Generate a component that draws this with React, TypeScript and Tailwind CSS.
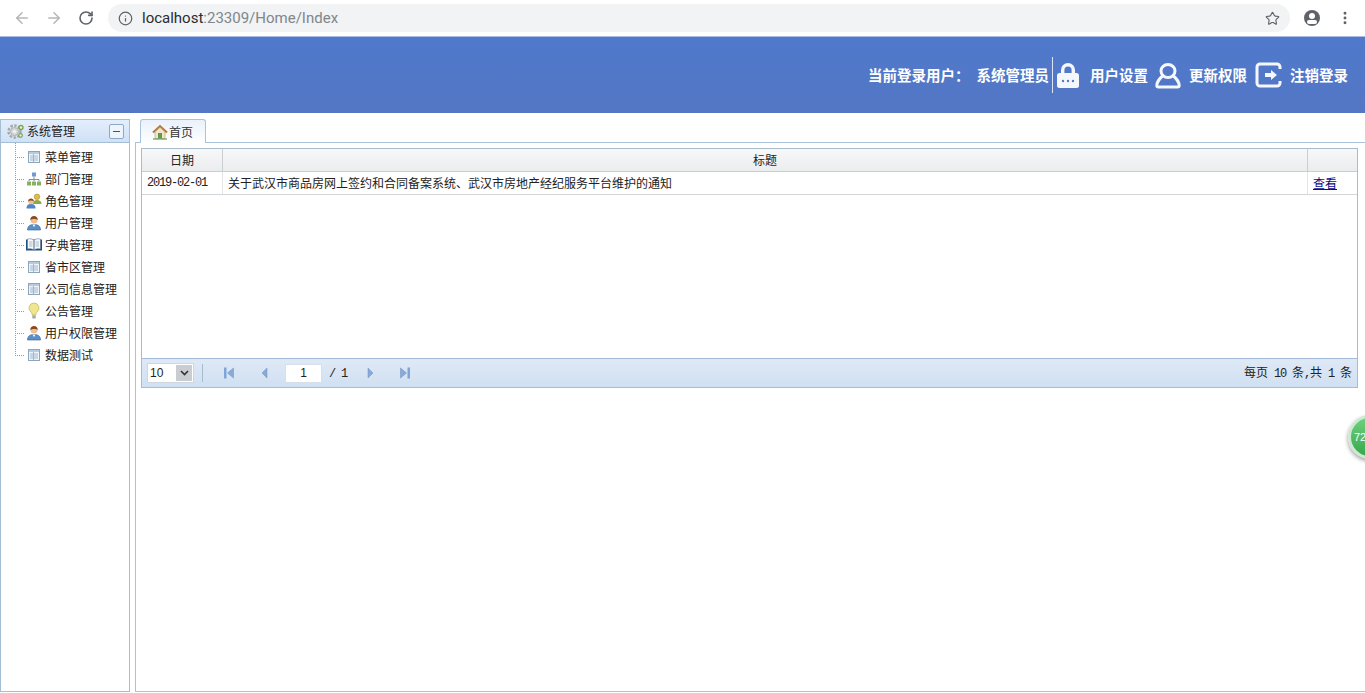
import React from 'react';
import { ArrowLeft, ArrowRight, RotateCw, Info, Star, MoreVertical } from 'lucide-react';

const cjk = 'font-["Noto_Sans_CJK_SC","Liberation_Sans",sans-serif]';
const mono = 'font-["Liberation_Mono","Noto_Sans_CJK_SC",monospace]';

// small tree icons
const TableIcon = () => (
  <svg width="16" height="16" viewBox="0 0 16 16">
    <rect x="2.500" y="2.500" width="11" height="11" fill="#eef4fa" stroke="#8fa5b8" />
    <rect x="3" y="3" width="10" height="2" fill="#b4cce2" />
    <path d="M4 7h8M4 9h8M4 11h8M7.500 5v8" stroke="#9db8d0" strokeWidth="1" />
  </svg>
);

const OrgIcon = () => (
  <svg width="16" height="16" viewBox="0 0 16 16">
    <rect x="6" y="1.500" width="4" height="4" fill="#6f9bd0" />
    <path d="M8 5.500v3M3 10V8.500h10V10M8 8.500V10" stroke="#7d8f9c" fill="none" />
    <rect x="1" y="10.500" width="4" height="4" fill="#86b25c" />
    <rect x="6" y="10.500" width="4" height="4" fill="#86b25c" />
    <rect x="11" y="10.500" width="4" height="4" fill="#86b25c" />
  </svg>
);

const UserIcon = () => (
  <svg width="16" height="16" viewBox="0 0 16 16">
    <path d="M1.500 15c0-4 2.500-5.500 6.500-5.500s6.500 1.500 6.500 5.500z" fill="#5d8fc9" stroke="#2f5f96" strokeWidth="0.600" />
    <path d="M6.500 9.500 8 12l1.500-2.500z" fill="#fff" />
    <circle cx="8" cy="5" r="3.600" fill="#f2bd92" />
    <path d="M4.300 5c0-3 1.700-4 3.700-4s3.700 1 3.700 4C10.500 3.500 6 3.500 4.300 5z" fill="#8a4b22" />
  </svg>
);

const RoleIcon = () => (
  <svg width="16" height="16" viewBox="0 0 16 16">
    <circle cx="11" cy="3.800" r="2.800" fill="#e3b94c" stroke="#a98420" strokeWidth="0.500" />
    <path d="M7 11c0-3 1.500-4 4-4s4.500 1 4.500 4z" fill="#86ad3e" />
    <path d="M0.500 15.500c0-3.500 1.800-4.500 4.500-4.500s4.500 1 4.500 4.500z" fill="#4f86c6" />
    <circle cx="5" cy="8.500" r="2.800" fill="#f2bd92" />
    <path d="M2.200 8.500c0-2.200 1.300-3 2.800-3s2.800 0.800 2.800 3C6.500 7.300 3.500 7.300 2.200 8.500z" fill="#8a4b22" />
  </svg>
);

const BookIcon = () => (
  <svg width="18" height="16" viewBox="0 0 18 16">
    <path d="M1 2.500h16v11H1z" fill="#1f4f7e" />
    <path d="M2.500 2c2.500-0.600 5 0 6.500 1 1.500-1 4-1.600 6.500-1v10c-2.500-0.500-5 0-6.500 1-1.500-1-4-1.500-6.500-1z" fill="#f6f8fb" stroke="#48688a" strokeWidth="0.500" />
    <path d="M9 3v10" stroke="#48688a" />
    <path d="M4 5h3.500M4 7h3.500M4 9h3.500M10.500 5H14M10.500 7H14M10.500 9H14" stroke="#aab8c6" />
  </svg>
);

const BulbIcon = () => (
  <svg width="16" height="18" viewBox="0 0 16 18">
    <path d="M8 1a5 5 0 0 0-3 9c0.800 0.800 1 1.500 1.200 3h3.600c0.200-1.500 0.400-2.200 1.200-3a5 5 0 0 0-3-9z" fill="#f0e68f" stroke="#bdb35c" strokeWidth="0.700" />
    <rect x="6.300" y="13.300" width="3.400" height="3.200" fill="#a4a9ab" />
  </svg>
);

const GearIcon = () => (
  <svg width="18" height="18" viewBox="0 0 18 18">
    <circle cx="7.500" cy="9.500" r="6" fill="none" stroke="#a3a8a9" strokeWidth="2.400" strokeDasharray="2.400 1.500" />
    <circle cx="7.500" cy="9.500" r="4" fill="#d5d8d8" stroke="#9fa4a5" strokeWidth="0.800" />
    <circle cx="7.500" cy="9.500" r="1.600" fill="#f2f3f3" />
    <circle cx="14" cy="5.500" r="2" fill="#e8f1dc" stroke="#7fa84e" strokeWidth="1.400" />
    <circle cx="13.500" cy="13.500" r="1.800" fill="#e8f1dc" stroke="#7fa84e" strokeWidth="1.300" />
  </svg>
);

const HomeIcon = () => (
  <svg width="18" height="16" viewBox="0 0 18 16">
    <path d="M2 8.500 9 2l7 6.500" fill="none" stroke="#b6793a" strokeWidth="2" />
    <path d="M4 8 9 3.500 14 8v6.500H4z" fill="#f2e6c8" stroke="#9d8a5c" strokeWidth="0.500" />
    <rect x="7" y="9" width="4" height="5.500" fill="#5f9a4f" />
    <path d="M2 15h14" stroke="#6b9c5a" strokeWidth="1.200" />
  </svg>
);

type MenuRow = { label: string; icon: React.ReactNode };

const menu: MenuRow[] = [
  { label: '菜单管理', icon: <TableIcon /> },
  { label: '部门管理', icon: <OrgIcon /> },
  { label: '角色管理', icon: <RoleIcon /> },
  { label: '用户管理', icon: <UserIcon /> },
  { label: '字典管理', icon: <BookIcon /> },
  { label: '省市区管理', icon: <TableIcon /> },
  { label: '公司信息管理', icon: <TableIcon /> },
  { label: '公告管理', icon: <BulbIcon /> },
  { label: '用户权限管理', icon: <UserIcon /> },
  { label: '数据测试', icon: <TableIcon /> },
];

const LockIcon = () => (
  <svg width="26" height="27" viewBox="0 0 26 27" fill="#f4f7fc">
    <path d="M6 12V8a7 7 0 0 1 14 0v4h-3.400V8.200a3.600 3.600 0 0 0-7.200 0V12z" />
    <rect x="2" y="11" width="22" height="15" rx="2.500" />
    <circle cx="8" cy="19" r="1.200" fill="#5278c8" />
    <circle cx="13" cy="19" r="1.200" fill="#5278c8" />
    <circle cx="18" cy="19" r="1.200" fill="#5278c8" />
  </svg>
);

const PersonIcon = () => (
  <svg width="26" height="27" viewBox="0 0 26 27" fill="none" stroke="#f4f7fc" strokeWidth="3">
    <ellipse cx="13" cy="9" rx="7" ry="6.500" />
    <path d="M7.500 14C4 17 2 20 1.800 23.500c0 1 .7 1.500 1.700 1.500h19c1 0 1.700-.5 1.700-1.500C24 20 22 17 18.500 14" strokeLinejoin="round" />
  </svg>
);

const LogoutIcon = () => (
  <svg width="27" height="26" viewBox="0 0 27 26" fill="none">
    <path d="M25 7V5a3 3 0 0 0-3-3H5a3 3 0 0 0-3 3v16a3 3 0 0 0 3 3h17a3 3 0 0 0 3-3v-2" stroke="#f4f7fc" strokeWidth="3" />
    <path d="M10 11h6V8l6 5-6 5v-3h-6z" fill="#f4f7fc" />
  </svg>
);

const PagerArrow = ({ dir, bar }: { dir: 'l' | 'r'; bar?: boolean }) => (
  <svg width="12" height="14" viewBox="0 0 12 14">
    {dir === 'l' ? (
      <>
        {bar && <rect x="1" y="1.500" width="2.500" height="11" fill="#7ea4d8" />}
        <path d={bar ? 'M10.500 2v10L4.500 7z' : 'M9 2v10L4 7z'} fill="#8aa9d6" stroke="#6c90c4" strokeWidth="0.500" />
      </>
    ) : (
      <>
        <path d={bar ? 'M1.500 2v10l6-5z' : 'M3 2v10l5-5z'} fill="#8aa9d6" stroke="#6c90c4" strokeWidth="0.500" />
        {bar && <rect x="8.500" y="1.500" width="2.500" height="11" fill="#7ea4d8" />}
      </>
    )}
  </svg>
);

const BrowserBar = () => (
  <div className="h-[37px] bg-white flex items-center pl-[13px] pr-[12px] border-b border-[#a9bde3]">
    <ArrowLeft size={18} strokeWidth={2} className="text-[#b4b6b8]" />
    <ArrowRight size={18} strokeWidth={2} className="text-[#b4b6b8] ml-[14px]" />
    <RotateCw size={16} strokeWidth={2.400} className="text-[#5f6368] ml-[15px]" />
    <div className="ml-[14px] h-[28px] w-[1182px] rounded-full bg-[#f1f3f4] flex items-center pl-[10px] pr-[10px] font-['Roboto',sans-serif] text-[15px]">
      <Info size={15} strokeWidth={2} className="text-[#5f6368]" />
      <span className="ml-[9px] text-[#2a2c2e]">localhost</span>
      <span className="text-[#80868b]">:23309/Home/Index</span>
      <Star size={15} strokeWidth={1.800} className="text-[#5f6368] ml-auto" />
    </div>
    <div className="ml-[14px] w-[16px] h-[16px] rounded-full bg-[#5f6368] relative overflow-hidden">
      <div className="absolute left-[5px] top-[3px] w-[6px] h-[6px] rounded-full bg-white" />
      <div className="absolute left-[3px] top-[10px] w-[10px] h-[4px] rounded-full bg-white" />
    </div>
    <MoreVertical size={16} strokeWidth={2.400} className="text-[#5f6368] ml-[17px]" />
  </div>
);

const Header = () => (
  <div className={`h-[76px] bg-gradient-to-b from-[#4f79cc] to-[#5476c4] flex items-center justify-end pr-[17px] text-white text-[14.5px] font-semibold ${cjk}`}>
    <span>当前登录用户：</span>
    <span className="ml-[7px]">系统管理员</span>
    <div className="w-px h-[36px] bg-[#dbe5f7] ml-[3px]" />
    <div className="ml-[2px]"><LockIcon /></div>
    <span className="ml-[9px]">用户设置</span>
    <div className="ml-[7px]"><PersonIcon /></div>
    <span className="ml-[8px]">更新权限</span>
    <div className="ml-[8px]"><LogoutIcon /></div>
    <span className="ml-[8px]">注销登录</span>
  </div>
);

const Sidebar = () => (
  <div className="w-[130px] mt-[6px] border border-[#a4bed4] flex flex-col shrink-0">
    <div className="h-[23px] bg-gradient-to-b from-[#e3eefb] to-[#d0e1f7] border-b border-[#a4bed4] flex items-center pl-[6px] pr-[5px]">
      <GearIcon />
      <span className="ml-[2px] text-[12px] text-[#222]">系统管理</span>
      <div className="ml-auto w-[15px] h-[15px] border border-[#8fa8c8] rounded-[2px] bg-[#eef4fc] flex items-center justify-center">
        <div className="w-[7px] h-px bg-[#456]" />
      </div>
    </div>
    <div className="relative pt-[3px] pl-[14px]">
      <div className="absolute left-[14px] top-0 h-[211px] border-l border-dotted border-[#9a9a9a]" />
      {menu.map((row) => (
        <div key={row.label} className="h-[22px] flex items-center text-[12px] text-[#222]">
          <div className="w-[9px] border-t border-dotted border-[#9a9a9a]" />
          <div className="w-[20px] flex justify-center">{row.icon}</div>
          <span className="ml-[1px]">{row.label}</span>
        </div>
      ))}
    </div>
  </div>
);

const Num = ({ children }: { children: React.ReactNode }) => (
  <span className={`${mono} tracking-[-1.200px]`}>{children}</span>
);

const Pager = () => (
  <div className="h-[29px] bg-gradient-to-b from-[#dfe9f6] to-[#d0e0f2] border-t border-[#a3bad9] flex items-center pl-[5px] pr-[5px] text-[12px] text-[#222]">
    <div className="w-[47px] h-[20px] bg-white border border-[#cfd6df] flex items-center justify-between pl-[2px] pr-[1px] font-['Liberation_Sans',sans-serif]">
      <span>10</span>
      <div className="w-[16px] h-[16px] bg-[#c9ccd0] flex items-center justify-center">
        <svg width="9" height="6" viewBox="0 0 9 6"><path d="M1 1l3.500 3.500L8 1" fill="none" stroke="#333" strokeWidth="1.600" /></svg>
      </div>
    </div>
    <div className="w-px h-[18px] bg-[#a9bccf] ml-[8px]" />
    <div className="ml-[20px]"><PagerArrow dir="l" bar /></div>
    <div className="ml-[23px]"><PagerArrow dir="l" /></div>
    <div className="ml-[15px] w-[37px] h-[19px] bg-white border border-[#d7e0ea] flex items-center justify-center font-['Liberation_Sans',sans-serif]">1</div>
    <span className="ml-[7px] whitespace-pre"><Num>/ 1</Num></span>
    <div className="ml-[18px]"><PagerArrow dir="r" /></div>
    <div className="ml-[22px]"><PagerArrow dir="r" bar /></div>
    <span className="ml-auto whitespace-pre">
      每页<Num> 10 </Num>条<Num>,</Num>共<Num> 1 </Num>条
    </span>
  </div>
);

const Grid = () => (
  <div className="mt-[5px] ml-[5px] mr-[7px] h-[240px] border border-[#a9bcc9] flex flex-col">
    <div className="h-[23px] flex bg-gradient-to-b from-[#f8f8f9] to-[#ebecee] border-b border-[#c9ced3] text-[12px] text-[#222] text-center leading-[22px]">
      <div className="w-[81px] border-r border-[#c9ced3]">日期</div>
      <div className="flex-1 border-r border-[#c9ced3]">标题</div>
      <div className="w-[49px]" />
    </div>
    <div className="h-[23px] flex border-b border-[#d3d6d9] text-[12px] text-[#222] leading-[22px]">
      <div className={`w-[81px] border-r border-[#e3e5e7] pl-[5px] ${mono} tracking-[-1.200px]`}>2019-02-01</div>
      <div className="flex-1 border-r border-[#e3e5e7] pl-[5px]">关于武汉市商品房网上签约和合同备案系统、武汉市房地产经纪服务平台维护的通知</div>
      <div className="w-[49px] pl-[5px] text-[#0b0b8c] underline">查看</div>
    </div>
    <div className="flex-1" />
    <Pager />
  </div>
);

export default function App() {
  return (
    <div className={`w-[1365px] h-[693px] overflow-hidden bg-white relative flex flex-col ${cjk}`}>
      <BrowserBar />
      <Header />
      <div className="flex-1 flex min-h-0 pb-px">
        <Sidebar />
        <div className="flex-1 ml-[5px] flex flex-col pt-[6px]">
          <div className="h-[24px] pl-[5px] relative z-10">
            <div className="w-[66px] h-[24px] bg-gradient-to-b from-[#e9f1fb] to-white border border-[#a9c3de] border-b-0 rounded-t-[3px] flex items-center pl-[10px] text-[12px] text-[#333]">
              <HomeIcon />
              <span>首页</span>
            </div>
          </div>
          <div className="flex-1 -mt-px border border-[#a9c3de] border-r-0">
            <Grid />
          </div>
        </div>
      </div>
      <div className="absolute left-[1348px] top-[415px] w-[44px] h-[44px] rounded-full bg-gradient-to-b from-[#6fd07f] to-[#35a84a] border-[3px] border-[#cfe8d4] shadow-[0_2px_4px_rgba(0,0,0,0.4)] flex items-center pl-[3px] text-[11px] text-white font-['Liberation_Sans',sans-serif]">
        72
      </div>
    </div>
  );
}
